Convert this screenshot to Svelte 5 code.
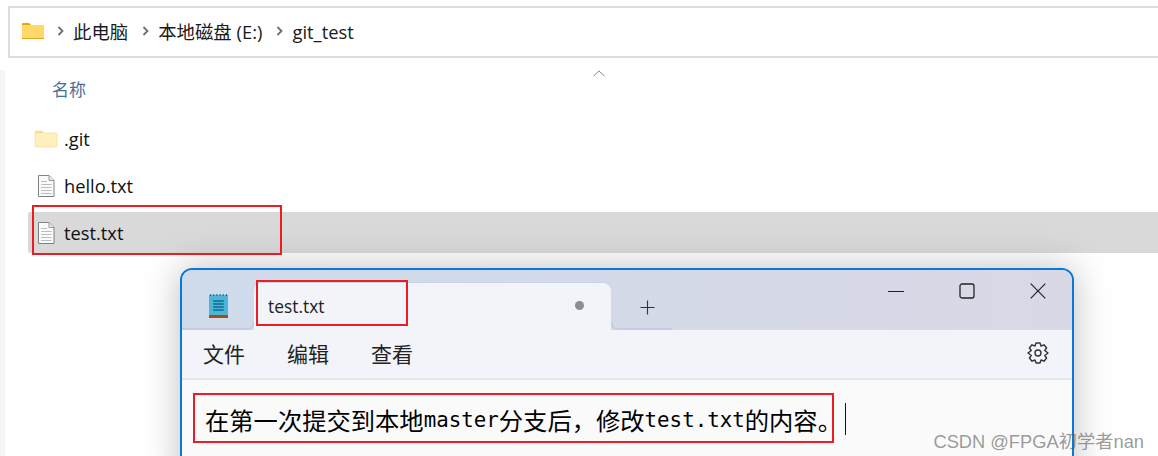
<script>
	let rows = [
		{ name: '.git', kind: 'folder' },
		{ name: 'hello.txt', kind: 'file' },
		{ name: 'test.txt', kind: 'file', selected: true }
	];
	let crumbs = ['此电脑', '本地磁盘 (E:)', 'git_test'];
	let menus = ['文件', '编辑', '查看'];
	let line = [
		['cjk', '在第一次提交到本地'],
		['mono', 'master'],
		['cjk', '分支后，修改'],
		['mono', 'test.txt'],
		['cjk', '的内容。']
	];
</script>

<main>
	<div class="addr">
		<svg class="addr-folder" width="24" height="18" viewBox="0 0 24 18">
			<path d="M1 3 Q1 1 3 1 H8 L10 3 H22 Q23 3 23 4 V16 Q23 17 22 17 H2 Q1 17 1 16 Z" fill="#ffd869" />
			<path d="M1 1.5 Q1 1 3 1 H8 L10 3 H1 Z" fill="#eba600" />
			<path d="M1 16 H23 V17 H1 Z" fill="#e0a526" />
		</svg>
		{#each crumbs as crumb}
			<svg class="chev" width="7" height="10" viewBox="0 0 7 10"><path d="M1.5 1 L5.5 5 L1.5 9" fill="none" stroke="#6f6f6f" stroke-width="1.8" /></svg>
			<span class="crumb">{crumb}</span>
		{/each}
	</div>

	<div class="list">
		<svg class="sort" width="14" height="7" viewBox="0 0 14 7"><path d="M1.5 6 L7 1 L12.5 6" fill="none" stroke="#8a8a8a" stroke-width="1" /></svg>
		<div class="head">名称</div>
		{#each rows as row}
			<div class="row" class:selected={row.selected}>
				{#if row.kind === 'folder'}
					<svg width="24" height="18" viewBox="0 0 24 18">
						<path d="M1 3 Q1 1 3 1 H8 L10 3 H22 Q23 3 23 4 V16 Q23 17 22 17 H2 Q1 17 1 16 Z" fill="#fff0bd" stroke="#f1d68f" stroke-width="0.6" />
						<path d="M1 1.5 H8 L10 3 H1 Z" fill="#f5d98c" />
					</svg>
				{:else}
					<svg width="18" height="22" viewBox="0 0 18 22">
						<path d="M1.5 .5 H12 L17 5.5 V21.5 H1.5 Z" fill="#fafafa" stroke="#828282" />
						<path d="M12 .5 V5.5 H17" fill="#e8e8e8" stroke="#9a9a9a" />
						<path d="M4 6.5 H10 M4 9.5 H14.5 M4 12.5 H14.5 M4 15.5 H14.5 M4 18.5 H14.5" stroke="#bcbcbc" />
					</svg>
				{/if}
				<span class="name">{row.name}</span>
			</div>
		{/each}
	</div>

	<div class="notepad">
		<div class="titlebar">
			<svg class="app-icon" width="19" height="24" viewBox="0 0 18 24" preserveAspectRatio="none">
				<rect x="0" y="1" width="18" height="21" fill="#4cb5d8" />
				<rect x="0" y="21" width="18" height="3" fill="#a44f12" />
				<path d="M1.5 0 V2 M4.5 0 V2 M7.5 0 V2 M10.5 0 V2 M13.5 0 V2 M16.5 0 V2" stroke="#0d6f8f" />
				<path d="M4 7 H14 M4 10 H14 M4 13 H14 M4 16 H14" stroke="#0b6a8c" stroke-width="1.6" />
			</svg>
			<div class="side-left"></div>
			<div class="tab">
				<span class="tab-name">test.txt</span>
				<span class="dot"></span>
			</div>
			<div class="side-right"></div>
			<svg class="plus" width="16" height="16" viewBox="0 0 16 16"><path d="M8 .5 V15.5 M.5 8 H15.5" stroke="#333" stroke-width="1.2" /></svg>
			<div class="win-btns">
				<svg width="16" height="16" viewBox="0 0 16 16"><path d="M0 8.5 H16" stroke="#222" stroke-width="1.2" /></svg>
				<svg width="16" height="16" viewBox="0 0 16 16"><rect x="1" y="1" width="14" height="14" rx="2" fill="none" stroke="#222" stroke-width="1.3" /></svg>
				<svg width="16" height="16" viewBox="0 0 16 16"><path d="M.7 .7 L15.3 15.3 M15.3 .7 L.7 15.3" stroke="#222" stroke-width="1.2" /></svg>
			</div>
		</div>
		<div class="menubar">
			{#each menus as menu}
				<span class="menu">{menu}</span>
			{/each}
			<svg class="gear" width="24" height="24" viewBox="0 0 24 24" fill="none" stroke="#333" stroke-width="1.4" stroke-linejoin="round">
				<circle cx="12" cy="12" r="3" />
				<path d="M10 2 H14 L15 5 L18 3.8 L20.6 7 L18.7 9.5 L22 12 L18.7 14.5 L20.6 17 L18 20.2 L15 19 L14 22 H10 L9 19 L6 20.2 L3.4 17 L5.3 14.5 L2 12 L5.3 9.5 L3.4 7 L6 3.8 L9 5 Z" />
			</svg>
		</div>
		<div class="editor">
			<div class="text">{#each line as part}<span class={part[0]}>{part[1]}</span>{/each}<span class="caret"></span></div>
		</div>
	</div>

	<div class="mark mark-row"></div>
	<div class="mark mark-tab"></div>
	<div class="mark mark-line"></div>
	<div class="watermark">CSDN @FPGA初学者nan</div>
</main>

<style>
	:global(body) {
		margin: 0;
		background: #fff;
	}
	main {
		position: relative;
		width: 1158px;
		height: 456px;
		overflow: hidden;
		background: #fff;
		font-family: "Open Sans", "Noto Sans CJK SC", sans-serif;
		color: #1a1a1a;
	}
	.addr {
		display: flex;
		align-items: center;
		box-sizing: border-box;
		height: 52px;
		margin: 6px 0 0 8px;
		padding: 0 0 2px 11px;
		border: 2px solid #dedede;
		border-right: none;
		font-size: 18.4px;
	}
	.addr-folder {
		margin-right: 12px;
	}
	.chev {
		margin-right: 9px;
		flex: none;
	}
	.crumb {
		margin-right: 14px;
	}
	.list {
		position: relative;
		margin-top: 12px;
		height: 386px;
		border-left: 5px solid #f5f5f5;
		box-sizing: border-box;
	}
	.sort {
		position: absolute;
		left: 587px;
		top: 0;
	}
	.head {
		padding: 8px 0 0 47px;
		height: 34px;
		font-size: 17px;
		line-height: 24px;
		color: #4a6f96;
	}
	.row {
		display: flex;
		align-items: center;
		gap: 6px;
		height: 41px;
		margin: 6px 0 6px 23px;
		padding-left: 6px;
		font-size: 18.3px;
		border-radius: 2px 0 0 2px;
	}
	.row svg {
		flex: none;
		width: 24px;
	}
	.row.selected {
		background: #d9d9d9;
	}
	.name {
		color: #111;
	}
	.notepad {
		position: absolute;
		left: 180px;
		top: 268px;
		width: 894px;
		height: 220px;
		box-sizing: border-box;
		border: 2px solid #0a78d7;
		border-radius: 12px;
		background: #fafafa;
		overflow: hidden;
		z-index: 1;
	}
	main::after {
		content: "";
		position: absolute;
		left: 180px;
		top: 268px;
		width: 894px;
		height: 220px;
		border-radius: 12px;
		box-shadow: 0 0 36px rgba(0, 0, 0, 0.26);
		z-index: 0;
		pointer-events: none;
	}
	.titlebar {
		position: relative;
		display: flex;
		align-items: flex-end;
		height: 60px;
		background: linear-gradient(90deg, #cfdbeb, #d9d8e6);
	}
	.app-icon {
		position: absolute;
		left: 27px;
		top: 24px;
	}
	.side-left {
		width: 72px;
		height: 8px;
		box-sizing: border-box;
		border-bottom: 2px solid #c3cfe0;
		border-right: 2px solid #c3cfe0;
		border-bottom-right-radius: 6px;
	}
	.side-right {
		width: 61px;
		height: 8px;
		box-sizing: border-box;
		border-bottom: 2px solid #c3cfe0;
		border-left: 2px solid #c3cfe0;
		border-bottom-left-radius: 6px;
	}
	.tab {
		display: flex;
		align-items: center;
		justify-content: space-between;
		box-sizing: border-box;
		width: 357px;
		height: 47px;
		padding: 0 27px 2px 14px;
		background: #f2f4f9;
		border-radius: 8px 8px 0 0;
		box-shadow: 0 -1px 0 #c9d4e4;
		font-size: 17.4px;
		font-weight: 500;
		color: #222;
	}
	.dot {
		width: 9px;
		height: 9px;
		border-radius: 50%;
		background: #8c8c91;
	}
	.plus {
		position: absolute;
		left: 458px;
		top: 30px;
		width: 15px;
		height: 15px;
	}
	.win-btns {
		position: absolute;
		top: 13px;
		right: 26px;
		display: flex;
		gap: 55px;
	}
	.menubar {
		display: flex;
		align-items: center;
		box-sizing: border-box;
		height: 50px;
		padding: 0 22px 2px 21px;
		gap: 42px;
		background: #f2f4f9;
		border-bottom: 2px solid #e6e7ec;
		font-size: 21px;
		color: #222;
	}
	.gear {
		margin-left: auto;
	}
	.editor {
		padding: 22px 0 0 23px;
	}
	.text {
		display: flex;
		align-items: center;
		height: 34px;
		color: #000;
		white-space: pre;
	}
	.cjk {
		font-size: 24.3px;
		font-family: "Noto Sans CJK SC", sans-serif;
	}
	.mono {
		font-size: 20.8px;
		font-family: "DejaVu Sans Mono", monospace;
		position: relative;
		top: 1px;
	}
	.caret {
		width: 1px;
		height: 32px;
		margin-left: 3px;
		background: #111;
	}
	.mark {
		position: absolute;
		box-sizing: border-box;
		border: 2px solid #ed1c24;
		z-index: 2;
	}
	.mark-row {
		left: 32px;
		top: 205px;
		width: 250px;
		height: 50px;
	}
	.mark-tab {
		left: 256px;
		top: 280px;
		width: 152px;
		height: 46px;
	}
	.mark-line {
		left: 193px;
		top: 393px;
		width: 641px;
		height: 50px;
	}
	.watermark {
		position: absolute;
		right: 14px;
		top: 427px;
		font-family: "Liberation Sans", "Noto Sans CJK SC", sans-serif;
		font-size: 18.3px;
		color: rgba(90, 90, 90, 0.62);
		z-index: 3;
	}
</style>
